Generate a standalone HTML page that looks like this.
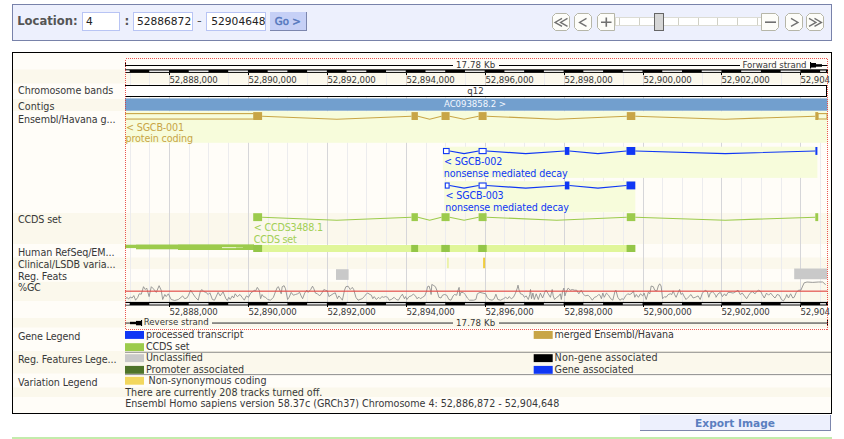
<!DOCTYPE html>
<html><head><meta charset="utf-8"><title>Region in detail</title>
<style>
html,body{margin:0;padding:0;background:#fff;width:844px;height:439px;overflow:hidden}
body{position:relative;font-family:'DejaVu Sans','Liberation Sans',sans-serif;}
#nav{position:absolute;left:12px;top:4px;width:818px;height:35px;background:#edf0fd;border:1px solid #7882aa;}
#nav .lab{position:absolute;left:4.2px;top:7.8px;font-family:'DejaVu Sans Condensed','DejaVu Sans',sans-serif;font-weight:bold;font-size:12.9px;color:#555;line-height:16px;white-space:pre}
#nav .in{position:absolute;top:7px;height:17px;background:#fff;border:1px solid #b8c4f4;font-size:10.65px;line-height:18px;color:#222;padding-left:3px;white-space:pre;overflow:hidden;box-sizing:content-box}
#nav .t{position:absolute;top:8px;font-size:11px;line-height:17px;color:#555}
#go{position:absolute;left:257px;top:7px;width:35.5px;height:18px;background:#c6d0f6;border-right:1px solid #7c86ad;border-bottom:1px solid #7c86ad;color:#5578bd;font-weight:normal;-webkit-text-stroke:0.5px #5578bd;font-size:10.2px;line-height:19.6px;text-align:center}
#exp{position:absolute;left:640px;top:415px;width:190px;height:15px;background:#edf0fd;border-right:1px solid #7c86ad;border-bottom:1px solid #7c86ad;color:#5b7fc0;font-weight:bold;font-size:10.6px;line-height:17px;text-align:center;font-family:'DejaVu Sans',sans-serif}
#gl{position:absolute;left:12px;top:437px;width:820px;height:2px;background:#c3ecac}
svg{position:absolute;left:0;top:0}
svg text{font-family:'DejaVu Sans','Liberation Sans',sans-serif;}
svg text.r{font-family:'DejaVu Sans','Liberation Sans',sans-serif;}
svg rect{shape-rendering:crispEdges}
svg .s{shape-rendering:auto}
svg .c{shape-rendering:crispEdges}
</style></head><body>
<div id="nav">
<span class="lab">Location:</span>
<span class="in" style="left:69px;width:33px">4</span>
<span class="t" style="left:111.5px;font-weight:bold;font-size:12px">:</span>
<span class="in" style="left:120px;width:55px">52886872</span>
<span class="t" style="left:184px;font-size:13px;top:7px">-</span>
<span class="in" style="left:193px;width:53.7px;padding-left:4.3px">52904648</span>
<span id="go">Go &gt;</span>
</div>
<svg width="844" height="439" viewBox="0 0 844 439">
<rect x="615" y="17.5" width="146" height="8" fill="#fff" stroke="#dcdcd4" stroke-width="1"/>
<rect x="618.5" y="18" width="1" height="7" fill="#d0d0c6"/>
<rect x="638.5" y="18" width="1" height="7" fill="#d0d0c6"/>
<rect x="658.5" y="18" width="1" height="7" fill="#d0d0c6"/>
<rect x="677.5" y="18" width="1" height="7" fill="#d0d0c6"/>
<rect x="697.5" y="18" width="1" height="7" fill="#d0d0c6"/>
<rect x="716.5" y="18" width="1" height="7" fill="#d0d0c6"/>
<rect x="736.5" y="18" width="1" height="7" fill="#d0d0c6"/>
<rect x="756.5" y="18" width="1" height="7" fill="#d0d0c6"/>
<polygon points="555.5,13.5 566.5,13.5 569.5,16.5 569.5,27.5 566.5,30.5 555.5,30.5 552.5,27.5 552.5,16.5" fill="#fdfdf9" stroke="#b6b6a8" stroke-width="1"/>
<polygon points="577.5,13.5 588.5,13.5 591.5,16.5 591.5,27.5 588.5,30.5 577.5,30.5 574.5,27.5 574.5,16.5" fill="#fdfdf9" stroke="#b6b6a8" stroke-width="1"/>
<polygon points="600.5,13.5 614.5,13.5 614.5,30.5 600.5,30.5 597.5,27.5 597.5,16.5" fill="#fdfdf9" stroke="#b6b6a8" stroke-width="1"/>
<polygon points="761.5,13.5 775.5,13.5 778.5,16.5 778.5,27.5 775.5,30.5 761.5,30.5" fill="#fdfdf9" stroke="#b6b6a8" stroke-width="1"/>
<polygon points="788.5,13.5 799.5,13.5 802.5,16.5 802.5,27.5 799.5,30.5 788.5,30.5 785.5,27.5 785.5,16.5" fill="#fdfdf9" stroke="#b6b6a8" stroke-width="1"/>
<polygon points="809.5,13.5 820.5,13.5 823.5,16.5 823.5,27.5 820.5,30.5 809.5,30.5 806.5,27.5 806.5,16.5" fill="#fdfdf9" stroke="#b6b6a8" stroke-width="1"/>
<polyline points="562,18.4 555,22.4 562,26.4" fill="none" stroke="#707070" stroke-width="1.3"/>
<polyline points="567.5,18.4 560.5,22.4 567.5,26.4" fill="none" stroke="#707070" stroke-width="1.3"/>
<polyline points="586.5,18.4 579.5,22.4 586.5,26.4" fill="none" stroke="#707070" stroke-width="1.3"/>
<polyline points="791,18.4 798,22.4 791,26.4" fill="none" stroke="#707070" stroke-width="1.3"/>
<polyline points="809,18.4 816,22.4 809,26.4" fill="none" stroke="#707070" stroke-width="1.3"/>
<polyline points="814.5,18.4 821.5,22.4 814.5,26.4" fill="none" stroke="#707070" stroke-width="1.3"/>
<path d="M601 22.2h10.5M606.3 17.6v9.2" stroke="#707070" stroke-width="1.6" fill="none"/>
<path d="M765 22.2h11" stroke="#707070" stroke-width="1.6" fill="none"/>
<rect x="654.5" y="13.5" width="9" height="17" fill="#d6d6d6" stroke="#666" stroke-width="1"/>
<rect x="12" y="52" width="820" height="362" fill="#fffdf8" />
<rect x="13" y="69.5" width="818" height="14" fill="#fbf8ec" class="s"/>
<rect x="13" y="99" width="818" height="12" fill="#fbf8ec" class="s"/>
<rect x="13" y="213" width="818" height="31" fill="#fbf8ec" class="s"/>
<rect x="13" y="257.5" width="818" height="11.5" fill="#fbf8ec" class="s"/>
<rect x="13" y="281.8" width="818" height="19.2" fill="#fbf8ec" class="s"/>
<rect x="13" y="318" width="818" height="9.5" fill="#fbf8ec" class="s"/>
<rect x="13" y="351" width="818" height="22.5" fill="#fbf8ec" class="s"/>
<rect x="13" y="387.5" width="818" height="9.5" fill="#fbf8ec" class="s"/>
<rect x="130" y="73" width="1" height="229" fill="#ececee" />
<rect x="149" y="73" width="1" height="229" fill="#ececee" />
<rect x="169" y="73" width="1" height="229" fill="#d6d6d9" />
<rect x="189" y="73" width="1" height="229" fill="#ececee" />
<rect x="208" y="73" width="1" height="229" fill="#ececee" />
<rect x="228" y="73" width="1" height="229" fill="#ececee" />
<rect x="248" y="73" width="1" height="229" fill="#d6d6d9" />
<rect x="268" y="73" width="1" height="229" fill="#ececee" />
<rect x="287" y="73" width="1" height="229" fill="#ececee" />
<rect x="307" y="73" width="1" height="229" fill="#ececee" />
<rect x="327" y="73" width="1" height="229" fill="#d6d6d9" />
<rect x="347" y="73" width="1" height="229" fill="#ececee" />
<rect x="366" y="73" width="1" height="229" fill="#ececee" />
<rect x="386" y="73" width="1" height="229" fill="#ececee" />
<rect x="406" y="73" width="1" height="229" fill="#d6d6d9" />
<rect x="426" y="73" width="1" height="229" fill="#ececee" />
<rect x="445" y="73" width="1" height="229" fill="#ececee" />
<rect x="465" y="73" width="1" height="229" fill="#ececee" />
<rect x="485" y="73" width="1" height="229" fill="#d6d6d9" />
<rect x="504" y="73" width="1" height="229" fill="#ececee" />
<rect x="524" y="73" width="1" height="229" fill="#ececee" />
<rect x="544" y="73" width="1" height="229" fill="#ececee" />
<rect x="564" y="73" width="1" height="229" fill="#d6d6d9" />
<rect x="583" y="73" width="1" height="229" fill="#ececee" />
<rect x="603" y="73" width="1" height="229" fill="#ececee" />
<rect x="623" y="73" width="1" height="229" fill="#ececee" />
<rect x="643" y="73" width="1" height="229" fill="#d6d6d9" />
<rect x="662" y="73" width="1" height="229" fill="#ececee" />
<rect x="682" y="73" width="1" height="229" fill="#ececee" />
<rect x="702" y="73" width="1" height="229" fill="#ececee" />
<rect x="721" y="73" width="1" height="229" fill="#d6d6d9" />
<rect x="741" y="73" width="1" height="229" fill="#ececee" />
<rect x="761" y="73" width="1" height="229" fill="#ececee" />
<rect x="781" y="73" width="1" height="229" fill="#ececee" />
<rect x="800" y="73" width="1" height="229" fill="#d6d6d9" />
<rect x="820" y="73" width="1" height="229" fill="#ececee" />
<rect x="125" y="65" width="703" height="1" fill="#000" />
<rect x="125" y="62" width="1" height="5" fill="#000" />
<rect x="453" y="60" width="46" height="10" fill="#fffdf8" />
<text class="r" x="456" y="67.6" font-size="8.6" fill="#383838" textLength="39.2">17.78 Kb</text>
<rect x="740" y="60" width="70" height="10" fill="#fffdf8" />
<text class="r" x="742.5" y="67.6" font-size="8.6" fill="#383838" textLength="64">Forward strand</text>
<rect x="810" y="62" width="1.1" height="6.5" fill="#000" class="s"/>
<rect x="811" y="63" width="5" height="4.5" fill="#000" class="s"/>
<rect x="816" y="64.2" width="6" height="2.5" fill="#000" class="s"/>
<clipPath id="clipimg"><rect x="13" y="53" width="817" height="360"/></clipPath>
<rect x="125" y="69.3" width="703" height="3.6" fill="#000" class="s"/>
<rect x="124.5" y="70.55" width="5.05088" height="1.35" fill="#fff" class="s"/>
<rect x="149.281" y="70.55" width="19.73" height="1.35" fill="#fff" class="s"/>
<rect x="188.741" y="70.55" width="19.73" height="1.35" fill="#fff" class="s"/>
<rect x="228.201" y="70.55" width="19.73" height="1.35" fill="#fff" class="s"/>
<rect x="267.661" y="70.55" width="19.73" height="1.35" fill="#fff" class="s"/>
<rect x="307.121" y="70.55" width="19.73" height="1.35" fill="#fff" class="s"/>
<rect x="346.581" y="70.55" width="19.73" height="1.35" fill="#fff" class="s"/>
<rect x="386.041" y="70.55" width="19.73" height="1.35" fill="#fff" class="s"/>
<rect x="425.501" y="70.55" width="19.73" height="1.35" fill="#fff" class="s"/>
<rect x="464.961" y="70.55" width="19.73" height="1.35" fill="#fff" class="s"/>
<rect x="504.421" y="70.55" width="19.73" height="1.35" fill="#fff" class="s"/>
<rect x="543.881" y="70.55" width="19.73" height="1.35" fill="#fff" class="s"/>
<rect x="583.341" y="70.55" width="19.73" height="1.35" fill="#fff" class="s"/>
<rect x="622.801" y="70.55" width="19.73" height="1.35" fill="#fff" class="s"/>
<rect x="662.261" y="70.55" width="19.73" height="1.35" fill="#fff" class="s"/>
<rect x="701.721" y="70.55" width="19.73" height="1.35" fill="#fff" class="s"/>
<rect x="741.181" y="70.55" width="19.73" height="1.35" fill="#fff" class="s"/>
<rect x="780.641" y="70.55" width="19.73" height="1.35" fill="#fff" class="s"/>
<rect x="820.101" y="70.55" width="5.84008" height="1.35" fill="#fff" class="s"/>
<rect x="126" y="70.55" width="3.55088" height="1.35" fill="#fff" class="s"/>
<rect x="169" y="73" width="1" height="2" fill="#000" />
<text class="r" x="169.4" y="83.1" font-size="8.6" fill="#383838" textLength="48.4" clip-path="url(#clipimg)">52,888,000</text>
<rect x="248" y="73" width="1" height="2" fill="#000" />
<text class="r" x="248.4" y="83.1" font-size="8.6" fill="#383838" textLength="48.4" clip-path="url(#clipimg)">52,890,000</text>
<rect x="327" y="73" width="1" height="2" fill="#000" />
<text class="r" x="327.4" y="83.1" font-size="8.6" fill="#383838" textLength="48.4" clip-path="url(#clipimg)">52,892,000</text>
<rect x="406" y="73" width="1" height="2" fill="#000" />
<text class="r" x="406.4" y="83.1" font-size="8.6" fill="#383838" textLength="48.4" clip-path="url(#clipimg)">52,894,000</text>
<rect x="485" y="73" width="1" height="2" fill="#000" />
<text class="r" x="485.4" y="83.1" font-size="8.6" fill="#383838" textLength="48.4" clip-path="url(#clipimg)">52,896,000</text>
<rect x="564" y="73" width="1" height="2" fill="#000" />
<text class="r" x="564.4" y="83.1" font-size="8.6" fill="#383838" textLength="48.4" clip-path="url(#clipimg)">52,898,000</text>
<rect x="643" y="73" width="1" height="2" fill="#000" />
<text class="r" x="643.4" y="83.1" font-size="8.6" fill="#383838" textLength="48.4" clip-path="url(#clipimg)">52,900,000</text>
<rect x="721" y="73" width="1" height="2" fill="#000" />
<text class="r" x="721.4" y="83.1" font-size="8.6" fill="#383838" textLength="48.4" clip-path="url(#clipimg)">52,902,000</text>
<rect x="800" y="73" width="1" height="2" fill="#000" />
<text class="r" x="800.4" y="83.1" font-size="8.6" fill="#383838" textLength="48.4" clip-path="url(#clipimg)">52,904,000</text>
<rect x="125" y="85" width="702" height="12" fill="#fff" />
<rect x="125" y="85" width="702" height="1" fill="#000" />
<rect x="125" y="96" width="702" height="1" fill="#000" />
<rect x="826" y="85" width="1" height="12" fill="#000" />
<text class="r" x="467.3" y="93.7" font-size="8.6" fill="#383838" >q12</text>
<rect x="125" y="98.4" width="702.5" height="12.3" fill="#729fce" class="s"/>
<text class="r" x="444" y="106.6" font-size="8.6" fill="#f4f8ff" textLength="62">AC093858.2 &gt;</text>
<rect x="125" y="111.2" width="702.5" height="31.6" fill="#f7fcdb" class="s"/>
<rect x="125" y="113.05" width="128.5" height="1.1" fill="#c8a546" class="s"/>
<rect x="125" y="118.5" width="128.5" height="1.1" fill="#c8a546" class="s"/>
<polyline points="262.1,116.2 336.8,119.2 411.5,116.2" fill="none" stroke="#c8a546" stroke-width="1.15"/>
<polyline points="417.9,116.2 429.7,119.2 441.5,116.2" fill="none" stroke="#c8a546" stroke-width="1.15"/>
<polyline points="449.6,116.2 464.1,119.2 478.6,116.2" fill="none" stroke="#c8a546" stroke-width="1.15"/>
<polyline points="486.6,116.2 556.7,119.2 626.8,116.2" fill="none" stroke="#c8a546" stroke-width="1.15"/>
<polyline points="635.3,116.2 725.3,119.2 815.3,116.2" fill="none" stroke="#c8a546" stroke-width="1.15"/>
<rect x="253.2" y="112.1" width="8.9" height="7.9" fill="#c8a546" class="s"/>
<rect x="411.5" y="112.1" width="6.4" height="7.9" fill="#c8a546" class="s"/>
<rect x="441.5" y="112.1" width="8.1" height="7.9" fill="#c8a546" class="s"/>
<rect x="478.6" y="112.1" width="8" height="7.9" fill="#c8a546" class="s"/>
<rect x="626.8" y="112.1" width="8.5" height="7.9" fill="#c8a546" class="s"/>
<rect x="815.3" y="112.1" width="2.9" height="7.9" fill="#c8a546" class="s"/>
<rect x="818" y="113.6" width="9" height="5.4" fill="none" stroke="#c8a546" stroke-width="1.1" class="s"/>
<text x="126" y="130.7" font-size="9.6" fill="#c8a546" textLength="58">&lt; SGCB-001</text>
<text x="125.5" y="142.4" font-size="9.6" fill="#c8a546" textLength="67.5">protein coding</text>
<rect x="442.8" y="146.7" width="374.6" height="31.2" fill="#f7fcdb" class="s"/>
<polyline points="449.6,151 464.1,153.6 478.6,151" fill="none" stroke="#0f37f5" stroke-width="1.15"/>
<polyline points="486.6,151 525.7,153.6 564.8,151" fill="none" stroke="#0f37f5" stroke-width="1.15"/>
<polyline points="569.4,151 597.95,153.6 626.5,151" fill="none" stroke="#0f37f5" stroke-width="1.15"/>
<polyline points="635.3,151 725.35,153.6 815.4,151" fill="none" stroke="#0f37f5" stroke-width="1.15"/>
<rect x="443.5" y="148.5" width="5.6" height="5.1" fill="#fff" stroke="#0f37f5" stroke-width="1.1" class="s"/>
<rect x="479.1" y="148.5" width="7" height="5.1" fill="#fff" stroke="#0f37f5" stroke-width="1.1" class="s"/>
<rect x="564.8" y="147" width="4.6" height="7.9" fill="#0f37f5" class="s"/>
<rect x="626.5" y="147" width="8.8" height="7.9" fill="#0f37f5" class="s"/>
<rect x="815.4" y="147" width="2" height="7.9" fill="#0f37f5" class="s"/>
<text x="444" y="164.9" font-size="9.6" fill="#0f37f5" textLength="58.3">&lt; SGCB-002</text>
<text x="443.8" y="176.5" font-size="9.6" fill="#0f37f5" textLength="123.8">nonsense mediated decay</text>
<rect x="444.2" y="181.2" width="191.1" height="31.2" fill="#f7fcdb" class="s"/>
<polyline points="449.6,185.5 464.1,188.1 478.6,185.5" fill="none" stroke="#0f37f5" stroke-width="1.15"/>
<polyline points="486.6,185.5 525.7,188.1 564.8,185.5" fill="none" stroke="#0f37f5" stroke-width="1.15"/>
<polyline points="569.4,185.5 597.95,188.1 626.5,185.5" fill="none" stroke="#0f37f5" stroke-width="1.15"/>
<rect x="445.3" y="183" width="3.8" height="5.1" fill="#fff" stroke="#0f37f5" stroke-width="1.1" class="s"/>
<rect x="479.1" y="183" width="7" height="5.1" fill="#fff" stroke="#0f37f5" stroke-width="1.1" class="s"/>
<rect x="564.8" y="181.5" width="4.6" height="7.9" fill="#0f37f5" class="s"/>
<rect x="626.5" y="181.5" width="8.8" height="7.9" fill="#0f37f5" class="s"/>
<text x="445.4" y="199.4" font-size="9.6" fill="#0f37f5" textLength="58.3">&lt; SGCB-003</text>
<text x="445.2" y="211" font-size="9.6" fill="#0f37f5" textLength="123.8">nonsense mediated decay</text>
<polyline points="262.1,217.2 336.8,220.2 411.5,217.2" fill="none" stroke="#9ccb4c" stroke-width="1.15"/>
<polyline points="417.9,217.2 429.7,220.2 441.5,217.2" fill="none" stroke="#9ccb4c" stroke-width="1.15"/>
<polyline points="449.6,217.2 464.1,220.2 478.6,217.2" fill="none" stroke="#9ccb4c" stroke-width="1.15"/>
<polyline points="486.6,217.2 556.7,220.2 626.8,217.2" fill="none" stroke="#9ccb4c" stroke-width="1.15"/>
<polyline points="635.3,217.2 725.3,220.2 815.3,217.2" fill="none" stroke="#9ccb4c" stroke-width="1.15"/>
<rect x="253.2" y="213.2" width="8.9" height="7.9" fill="#9ccb4c" class="s"/>
<rect x="411.5" y="213.2" width="6.4" height="7.9" fill="#9ccb4c" class="s"/>
<rect x="441.5" y="213.2" width="8.1" height="7.9" fill="#9ccb4c" class="s"/>
<rect x="478.6" y="213.2" width="8" height="7.9" fill="#9ccb4c" class="s"/>
<rect x="626.8" y="213.2" width="8.5" height="7.9" fill="#9ccb4c" class="s"/>
<rect x="815.3" y="213.2" width="2.9" height="7.9" fill="#9ccb4c" class="s"/>
<text x="253.8" y="231.2" font-size="9.6" fill="#a2cf55" textLength="69.3">&lt; CCDS3488.1</text>
<text x="253.8" y="243.1" font-size="9.6" fill="#a2cf55" textLength="43">CCDS set</text>
<rect x="258" y="245" width="377.3" height="7" fill="#e0f69a" class="s"/>
<rect x="125" y="244.7" width="129" height="3.4" fill="#9ccb4c" class="s"/>
<rect x="136" y="244.7" width="118" height="4.6" fill="#9ccb4c" class="s"/>
<rect x="178" y="244.7" width="76" height="5.3" fill="#9ccb4c" class="s"/>
<rect x="222" y="247.2" width="14" height="0.9" fill="#f4fbe0" class="s"/>
<rect x="236" y="247.3" width="7" height="0.7" fill="#cfe8a0" class="s"/>
<rect x="253.2" y="244.9" width="8.9" height="7.1" fill="#94c648" class="s"/>
<rect x="411.2" y="244.9" width="6.9" height="7.1" fill="#94c648" class="s"/>
<rect x="441.3" y="244.9" width="8.5" height="7.1" fill="#94c648" class="s"/>
<rect x="478.2" y="244.9" width="8.5" height="7.1" fill="#94c648" class="s"/>
<rect x="626.6" y="244.9" width="8.7" height="7.1" fill="#94c648" class="s"/>
<rect x="447.3" y="257.7" width="1.3" height="10.5" fill="#e4f08c" class="s"/>
<rect x="483.1" y="257.7" width="2" height="10.5" fill="#f0cc3c" class="s"/>
<rect x="336" y="269.2" width="12.6" height="10.7" fill="#c9c9c9" class="s"/>
<rect x="794.2" y="268.5" width="33" height="10.7" fill="#c9c9c9" class="s"/>
<polyline points="125.7,298.7 127.1,297.3 128.5,299.2 130.2,297.0 132.1,298.0 133.8,295.6 135.6,300.2 137.8,297.3 139.2,293.8 141.3,294.2 143.5,286.7 145.3,289.5 146.7,288.1 149.1,296.6 151.3,286.7 153.4,288.8 156.3,292.4 159.1,285.7 161.2,290.2 162.7,299.5 164.8,294.5 166.2,296.6 168.3,293.8 171.2,299.5 174.7,300.5 178.3,299.5 181.1,297.3 182.6,295.9 184.7,298.7 186.8,298.0 188.2,295.9 190.7,290.2 192.5,293.1 195.4,297.3 198.2,300.2 200.3,291.6 201.8,289.5 203.9,291.6 206.0,292.4 208.2,294.5 209.9,292.8 212.4,299.5 214.5,300.2 218.1,292.4 220.2,295.9 223.1,291.9 225.9,298.7 227.3,300.5 228.8,297.3 230.2,299.5 232.3,295.9 233.7,298.0 235.2,293.8 237.3,296.6 240.0,294.5 242.1,297.3 244.3,300.2 246.4,295.9 248.5,297.3 250.7,293.1 252.8,291.6 254.2,290.2 255.6,290.9 257.3,287.4 259.2,290.2 260.6,298.7 262.0,294.5 263.5,296.6 265.6,297.3 267.7,299.5 270.6,300.2 273.4,297.3 275.5,291.6 277.3,287.4 278.4,286.7 279.8,290.2 281.2,293.8 282.2,286.7 284.1,285.7 285.5,288.8 287.6,299.5 289.1,297.3 291.2,292.4 293.3,295.2 295.5,294.5 297.6,293.8 299.7,292.4 301.1,295.9 302.6,298.7 304.7,293.1 306.8,290.2 308.2,292.4 310.7,289.5 312.5,286.2 313.9,288.8 315.4,293.1 317.5,293.8 319.6,295.9 321.8,293.1 323.9,289.5 325.3,290.2 327.4,290.9 328.9,296.6 331.0,295.2 333.1,293.8 335.3,292.8 337.4,298.7 338.8,295.9 340.2,297.3 342.4,300.2 344.5,290.2 345.9,286.7 348.1,286.2 350.2,289.5 352.3,287.4 353.7,289.5 355.9,297.3 358.0,300.2 360.0,299.5 362.1,298.7 364.3,296.6 366.4,293.8 367.8,293.1 370.0,294.5 371.4,295.2 372.8,298.7 374.2,296.6 376.4,299.5 378.5,297.3 379.9,298.7 382.0,296.6 383.5,297.3 385.6,296.6 387.7,297.3 389.1,300.2 391.3,299.5 394.1,297.3 396.3,299.5 398.4,300.2 400.5,296.6 402.4,294.2 404.4,298.7 405.5,296.6 406.9,299.5 409.1,296.6 411.2,295.9 413.3,294.2 415.5,295.9 416.9,298.7 419.0,297.3 420.4,298.7 422.6,297.3 424.7,295.9 426.5,291.6 427.5,286.7 429.0,286.0 430.4,290.2 431.1,294.5 431.8,284.5 433.2,285.2 435.4,286.7 436.8,290.2 438.9,297.3 441.0,298.0 442.5,295.2 444.6,294.5 446.7,295.2 448.9,299.5 451.0,300.2 453.1,295.9 454.5,294.5 456.7,295.2 458.1,290.2 459.1,287.4 459.8,295.9 460.9,292.4 463.1,292.4 465.2,294.5 467.3,298.0 469.5,300.2 473.7,300.2 475.9,299.5 477.3,293.8 480.0,292.4 482.8,293.1 485.7,293.8 487.1,297.3 489.2,299.5 492.1,300.2 494.2,298.7 495.9,294.2 497.8,299.5 500.6,300.2 503.5,298.7 505.6,297.3 507.7,298.7 509.1,296.6 511.3,298.7 513.4,297.3 515.5,293.1 517.3,288.1 518.0,285.2 519.1,290.2 520.5,293.8 522.7,294.5 524.4,297.3 526.2,295.9 528.3,299.5 529.8,294.5 530.5,289.5 531.5,298.7 532.9,293.1 534.3,299.5 536.2,293.8 538.3,299.5 540.4,293.1 542.6,298.0 544.7,292.4 546.1,290.2 548.2,293.8 550.4,297.3 552.2,289.5 553.2,295.9 554.6,299.5 556.8,297.3 558.9,295.9 560.3,293.8 561.3,299.5 562.5,291.6 563.9,288.1 564.9,295.9 566.3,291.6 568.2,288.1 570.3,290.2 572.4,289.5 574.5,290.2 576.7,290.2 578.8,293.8 581.2,290.2 583.1,293.8 585.2,295.9 588.1,295.2 590.2,297.3 592.3,300.2 594.5,297.3 596.6,296.6 598.7,294.5 600.0,295.2 601.4,298.7 602.8,293.1 604.3,297.3 606.4,293.1 608.5,295.2 610.7,298.7 612.8,300.2 614.9,291.6 615.9,290.2 617.8,297.3 619.9,300.2 622.0,298.7 623.5,299.5 625.6,295.9 627.7,293.8 629.9,294.5 632.0,293.1 633.4,290.9 634.8,297.3 636.3,294.5 638.4,297.3 640.5,293.8 642.7,295.9 644.1,293.1 646.2,299.5 648.3,292.4 649.8,293.8 651.2,286.0 653.3,286.7 654.7,290.2 656.9,290.9 658.3,286.0 659.7,283.8 661.1,286.0 662.6,298.7 664.7,296.6 666.1,297.3 668.2,294.5 670.4,293.8 671.8,294.5 673.2,290.9 674.6,294.5 676.1,297.3 678.2,292.4 679.6,289.5 681.0,294.5 682.5,293.1 683.9,295.9 686.0,299.5 688.2,297.3 691.0,294.5 693.1,298.0 695.3,297.3 698.1,295.9 700.2,299.5 702.4,293.1 705.2,290.2 707.3,291.6 708.8,297.3 710.2,293.1 712.3,291.6 714.5,293.8 715.9,295.9 716.0,297.3 718.1,293.8 720.3,292.4 722.4,296.6 724.5,293.8 726.0,295.9 728.1,292.4 730.2,292.4 733.1,293.1 735.9,291.6 738.0,290.2 740.2,294.5 742.3,293.1 744.4,295.9 746.6,298.7 748.7,295.2 750.8,292.4 752.3,291.6 755.1,293.8 756.5,291.6 758.7,290.2 760.8,291.6 762.2,294.5 764.3,298.0 766.5,293.1 768.6,295.2 770.7,293.1 772.9,295.9 775.0,298.0 777.1,294.5 779.3,295.2 781.4,299.5 783.5,300.9 785.7,297.3 786.7,294.5 788.5,298.0 790.6,293.8 792.8,298.0 794.2,297.3 796.3,292.4 798.5,290.2 800.9,290.2 802.7,286.0 804.2,282.8 807.0,282.0 812.7,282.4 818.4,282.0 822.6,282.0 824.8,283.8 825.5,284.8" fill="none" stroke="#8a8a8a" stroke-width="0.85" stroke-linejoin="round"/>
<rect x="125" y="290.6" width="702.5" height="1.15" fill="#e24a46" class="s"/>
<rect x="125" y="301.9" width="703" height="3.6" fill="#000" class="s"/>
<rect x="124.5" y="303.15" width="5.05088" height="1.35" fill="#fff" class="s"/>
<rect x="149.281" y="303.15" width="19.73" height="1.35" fill="#fff" class="s"/>
<rect x="188.741" y="303.15" width="19.73" height="1.35" fill="#fff" class="s"/>
<rect x="228.201" y="303.15" width="19.73" height="1.35" fill="#fff" class="s"/>
<rect x="267.661" y="303.15" width="19.73" height="1.35" fill="#fff" class="s"/>
<rect x="307.121" y="303.15" width="19.73" height="1.35" fill="#fff" class="s"/>
<rect x="346.581" y="303.15" width="19.73" height="1.35" fill="#fff" class="s"/>
<rect x="386.041" y="303.15" width="19.73" height="1.35" fill="#fff" class="s"/>
<rect x="425.501" y="303.15" width="19.73" height="1.35" fill="#fff" class="s"/>
<rect x="464.961" y="303.15" width="19.73" height="1.35" fill="#fff" class="s"/>
<rect x="504.421" y="303.15" width="19.73" height="1.35" fill="#fff" class="s"/>
<rect x="543.881" y="303.15" width="19.73" height="1.35" fill="#fff" class="s"/>
<rect x="583.341" y="303.15" width="19.73" height="1.35" fill="#fff" class="s"/>
<rect x="622.801" y="303.15" width="19.73" height="1.35" fill="#fff" class="s"/>
<rect x="662.261" y="303.15" width="19.73" height="1.35" fill="#fff" class="s"/>
<rect x="701.721" y="303.15" width="19.73" height="1.35" fill="#fff" class="s"/>
<rect x="741.181" y="303.15" width="19.73" height="1.35" fill="#fff" class="s"/>
<rect x="780.641" y="303.15" width="19.73" height="1.35" fill="#fff" class="s"/>
<rect x="820.101" y="303.15" width="5.84008" height="1.35" fill="#fff" class="s"/>
<rect x="126" y="303.15" width="3.55088" height="1.35" fill="#fff" class="s"/>
<rect x="169" y="305" width="1" height="2" fill="#000" />
<text class="r" x="169.4" y="315.2" font-size="8.6" fill="#383838" textLength="48.4" clip-path="url(#clipimg)">52,888,000</text>
<rect x="248" y="305" width="1" height="2" fill="#000" />
<text class="r" x="248.4" y="315.2" font-size="8.6" fill="#383838" textLength="48.4" clip-path="url(#clipimg)">52,890,000</text>
<rect x="327" y="305" width="1" height="2" fill="#000" />
<text class="r" x="327.4" y="315.2" font-size="8.6" fill="#383838" textLength="48.4" clip-path="url(#clipimg)">52,892,000</text>
<rect x="406" y="305" width="1" height="2" fill="#000" />
<text class="r" x="406.4" y="315.2" font-size="8.6" fill="#383838" textLength="48.4" clip-path="url(#clipimg)">52,894,000</text>
<rect x="485" y="305" width="1" height="2" fill="#000" />
<text class="r" x="485.4" y="315.2" font-size="8.6" fill="#383838" textLength="48.4" clip-path="url(#clipimg)">52,896,000</text>
<rect x="564" y="305" width="1" height="2" fill="#000" />
<text class="r" x="564.4" y="315.2" font-size="8.6" fill="#383838" textLength="48.4" clip-path="url(#clipimg)">52,898,000</text>
<rect x="643" y="305" width="1" height="2" fill="#000" />
<text class="r" x="643.4" y="315.2" font-size="8.6" fill="#383838" textLength="48.4" clip-path="url(#clipimg)">52,900,000</text>
<rect x="721" y="305" width="1" height="2" fill="#000" />
<text class="r" x="721.4" y="315.2" font-size="8.6" fill="#383838" textLength="48.4" clip-path="url(#clipimg)">52,902,000</text>
<rect x="800" y="305" width="1" height="2" fill="#000" />
<text class="r" x="800.4" y="315.2" font-size="8.6" fill="#383838" textLength="48.4" clip-path="url(#clipimg)">52,904,000</text>
<rect x="125" y="322.5" width="703" height="1.1" fill="#3c3c3c" class="s"/>
<rect x="827" y="320" width="1" height="6" fill="#000" />
<rect x="453" y="318" width="46" height="9" fill="#fbf8ec" />
<text class="r" x="456" y="325.6" font-size="8.6" fill="#383838" textLength="39.2">17.78 Kb</text>
<rect x="142" y="318" width="70" height="9" fill="#fbf8ec" />
<text class="r" x="143.7" y="325" font-size="8.6" fill="#383838" textLength="65">Reverse strand</text>
<rect x="141" y="320" width="1.1" height="6" fill="#000" class="s"/>
<rect x="136" y="320.9" width="5" height="4.4" fill="#000" class="s"/>
<rect x="130" y="321.8" width="6" height="2.4" fill="#000" class="s"/>
<rect x="125.5" y="58.5" width="702" height="271" fill="none" stroke="#e6302a" stroke-opacity="0.82" stroke-width="1" stroke-dasharray="1,1"/>
<rect x="125" y="331" width="19" height="7.9" fill="#0f37f5" class="s"/>
<text x="145.9" y="338" font-size="9.6" fill="#383838" textLength="97.5">processed transcript</text>
<rect x="125" y="343.2" width="19" height="7.9" fill="#9ccb4c" class="s"/>
<text x="145.9" y="350.2" font-size="9.6" fill="#383838" textLength="43.6">CCDS set</text>
<rect x="533.7" y="331" width="19" height="7.9" fill="#c8a546" class="s"/>
<text x="554.6" y="338" font-size="9.6" fill="#383838" textLength="119.4">merged Ensembl/Havana</text>
<rect x="125" y="351.8" width="706" height="0.9" fill="#808080" class="s"/>
<rect x="125" y="354.2" width="19" height="7.9" fill="#c9c9c9" class="s"/>
<text x="145.9" y="361.2" font-size="9.6" fill="#383838" textLength="57">Unclassified</text>
<rect x="125" y="365.9" width="19" height="7.9" fill="#4e7328" class="s"/>
<text x="145.9" y="372.9" font-size="9.6" fill="#383838" textLength="98.3">Promoter associated</text>
<rect x="533.7" y="354.2" width="19" height="7.9" fill="#000" class="s"/>
<text x="554.6" y="361.2" font-size="9.6" fill="#383838" textLength="103">Non-gene associated</text>
<rect x="533.7" y="365.9" width="19" height="7.9" fill="#0f37f5" class="s"/>
<text x="554.6" y="372.9" font-size="9.6" fill="#383838" textLength="79">Gene associated</text>
<rect x="125" y="374.2" width="706" height="0.9" fill="#808080" class="s"/>
<rect x="125" y="376.8" width="19" height="7.9" fill="#f2d75e" class="s"/>
<text x="148.5" y="383.8" font-size="9.6" fill="#383838" textLength="118">Non-synonymous coding</text>
<text x="125.3" y="395.6" font-size="9.6" fill="#383838" textLength="197">There are currently 208 tracks turned off.</text>
<text x="125.3" y="406.5" font-size="9.6" fill="#383838" textLength="434">Ensembl Homo sapiens version 58.37c (GRCh37) Chromosome 4: 52,886,872 - 52,904,648</text>
<text x="18" y="93.9" font-size="9.6" fill="#383838" textLength="95.2">Chromosome bands</text>
<text x="18" y="109.6" font-size="9.6" fill="#383838" textLength="36.5">Contigs</text>
<text x="18" y="122.6" font-size="9.6" fill="#383838" textLength="97.5">Ensembl/Havana g...</text>
<text x="18" y="222.7" font-size="9.6" fill="#383838" textLength="43.6">CCDS set</text>
<text x="18" y="256" font-size="9.6" fill="#383838" textLength="96.5">Human RefSeq/EM...</text>
<text x="18" y="268" font-size="9.6" fill="#383838" textLength="97.5">Clinical/LSDB varia...</text>
<text x="18" y="280" font-size="9.6" fill="#383838" textLength="49">Reg. Feats</text>
<text x="18" y="290.8" font-size="9.6" fill="#383838" textLength="22.8">%GC</text>
<text x="18" y="340" font-size="9.6" fill="#383838" textLength="62.4">Gene Legend</text>
<text x="18" y="363.3" font-size="9.6" fill="#383838" textLength="98.5">Reg. Features Lege...</text>
<text x="18" y="386" font-size="9.6" fill="#383838" textLength="79.5">Variation Legend</text>
<rect x="12.5" y="52.5" width="819" height="361" fill="none" stroke="#000" stroke-width="1"/>
</svg>
<div id="exp">Export Image</div>
<div id="gl"></div>
</body></html>
